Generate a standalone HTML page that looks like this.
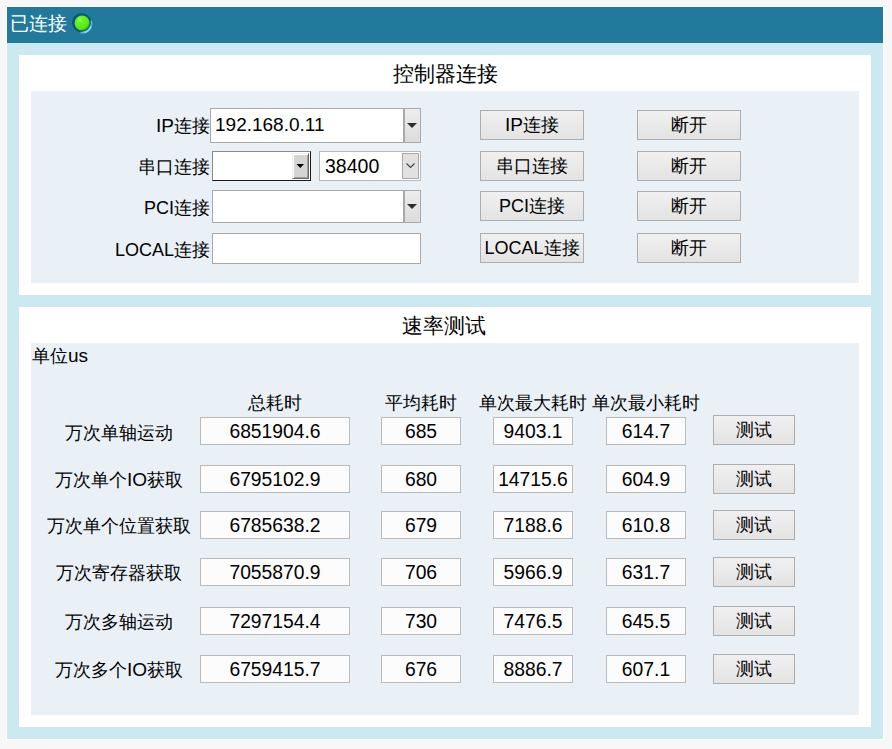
<!DOCTYPE html>
<html><head><meta charset="utf-8">
<style>
*{box-sizing:border-box;margin:0;padding:0}
html,body{width:892px;height:749px;overflow:hidden;background:#f7f7f7;font-family:"Liberation Sans",sans-serif;color:#000}
.a{position:absolute}
#frame{left:6px;top:6px;width:878px;height:734px;background:#fff}
#hdr{left:7px;top:7px;width:876px;height:36px;background:#217a9b}
#body{left:7px;top:43px;width:876px;height:696px;background:#cce8f1}
.wp{background:#fff}
.ip{background:#e9f1f7}
.t{white-space:nowrap;font-size:18px;line-height:20px}
.l{font-size:19px}
.btn{border:1px solid #adadad;background:linear-gradient(#f0f0f0,#e3e3e3);text-align:center;font-size:18px;line-height:28px;white-space:nowrap}
.cb{border:1px solid #a9a9a9;background:#fff}
.cbb{border-left:2px solid #a9a9a9;background:linear-gradient(#ededed,#dcdcdc)}
.tri{width:0;height:0;border-left:5px solid transparent;border-right:5px solid transparent;border-top:5px solid #2b2e31}
.vb{border:1px solid #bababa;background:#fcfcfc;text-align:center;font-size:19.3px;line-height:28px}
</style></head><body>
<div class="a" id="frame"></div>
<div class="a" id="hdr"></div>
<div class="a" id="body"></div>
<div class="a t" style="left:10px;top:14px;color:#fff;font-size:18.5px">已连接</div>
<svg class="a" style="left:70px;top:11px" width="26" height="26" viewBox="0 0 26 26">
<defs><radialGradient id="g" cx="0.35" cy="0.3" r="0.75"><stop offset="0" stop-color="#b4ff8c"/><stop offset="0.22" stop-color="#6cf71c"/><stop offset="0.8" stop-color="#58e80c"/><stop offset="1" stop-color="#3aa80c"/></radialGradient>
<filter id="bl" x="-30%" y="-30%" width="160%" height="160%"><feGaussianBlur stdDeviation="0.55"/></filter></defs>
<circle cx="11.6" cy="11.6" r="9.6" fill="#10577a" filter="url(#bl)"/>
<path d="M21.2 9.6 A9.6 9.6 0 0 1 10.4 21.5" stroke="#5bb4d8" stroke-width="1.6" fill="none" filter="url(#bl)"/>
<path d="M21.0 15.3 A9.6 9.6 0 0 1 13.7 21.5" stroke="#7fd4f4" stroke-width="2" fill="none" filter="url(#bl)"/>
<circle cx="12.1" cy="12" r="7.5" fill="url(#g)"/>
</svg>

<!-- panel 1 -->
<div class="a wp" style="left:19px;top:55px;width:852px;height:240px"></div>
<div class="a ip" style="left:31px;top:91px;width:828px;height:192px"></div>
<div class="a t" style="left:19px;top:62px;width:852px;text-align:center;font-size:21px;line-height:24px">控制器连接</div>

<div class="a t" style="left:60px;top:116px;width:150px;text-align:right"><span class="l">IP</span>连接</div>
<div class="a t" style="left:60px;top:157px;width:150px;text-align:right">串口连接</div>
<div class="a t" style="left:60px;top:198px;width:150px;text-align:right"><span class="l" style="font-size:18px">PCI</span>连接</div>
<div class="a t" style="left:60px;top:240px;width:150px;text-align:right"><span class="l" style="font-size:18px">LOCAL</span>连接</div>

<div class="a cb" style="left:210px;top:108px;width:211px;height:35px"></div>
<div class="a t" style="left:215px;top:115px;font-size:19px">192.168.0.11</div>
<div class="a cbb" style="left:403px;top:109px;width:17px;height:33px"></div>
<div class="a tri" style="left:407px;top:123px"></div>

<div class="a" style="left:212px;top:151px;width:99px;height:30px;background:#fff;border-top:1px solid #8a8a8a;border-left:1px solid #8a8a8a;border-right:1px solid #1a1a1a;border-bottom:1px solid #1a1a1a"></div>
<div class="a" style="left:292px;top:153px;width:17px;height:26px;background:#d4d4d4;border-top:1px solid #f0f0f0;border-left:1px solid #f0f0f0;border-right:1px solid #696969;border-bottom:1px solid #696969;box-shadow:inset 1px 1px 0 #fff,inset -1px -1px 0 #a0a0a0"></div>
<svg class="a" style="left:290px;top:160px" width="20" height="12"><polygon points="6.5,4 14,4 10.25,8" fill="#000"/></svg>

<div class="a cb" style="left:319px;top:151px;width:102px;height:30px;border-color:#b8b8b8"></div>
<div class="a t" style="left:325px;top:156px;font-size:19.5px">38400</div>
<div class="a" style="left:402px;top:153px;width:17px;height:26px;border:1px solid #a8a8a8;background:#e1e1e1"></div>
<svg class="a" style="left:402px;top:153px" width="17" height="26"><path d="M4.5 10.5 L8.5 14.5 L12.5 10.5" stroke="#404040" stroke-width="1.1" fill="none"/></svg>

<div class="a cb" style="left:212px;top:190px;width:209px;height:33px"></div>
<div class="a cbb" style="left:403px;top:191px;width:17px;height:31px"></div>
<div class="a tri" style="left:407px;top:204px"></div>

<div class="a cb" style="left:212px;top:233px;width:209px;height:31px"></div>

<div class="a btn" style="left:480px;top:110px;width:104px;height:30px"><span class="l">IP</span>连接</div>
<div class="a btn" style="left:480px;top:151px;width:104px;height:30px">串口连接</div>
<div class="a btn" style="left:480px;top:191px;width:104px;height:30px"><span class="l" style="font-size:18px">PCI</span>连接</div>
<div class="a btn" style="left:480px;top:233px;width:104px;height:30px"><span class="l" style="font-size:18px">LOCAL</span>连接</div>
<div class="a btn" style="left:637px;top:110px;width:104px;height:30px">断开</div>
<div class="a btn" style="left:637px;top:151px;width:104px;height:30px">断开</div>
<div class="a btn" style="left:637px;top:191px;width:104px;height:30px">断开</div>
<div class="a btn" style="left:637px;top:233px;width:104px;height:30px">断开</div>

<!-- panel 2 -->
<div class="a wp" style="left:19px;top:307px;width:852px;height:420px"></div>
<div class="a ip" style="left:31px;top:343px;width:828px;height:372px"></div>
<div class="a t" style="left:18px;top:314px;width:852px;text-align:center;font-size:21px;line-height:24px">速率测试</div>
<div class="a t" style="left:32px;top:346px">单位<span class="l">us</span></div>

<div class="a t" style="left:200px;top:393px;width:150px;text-align:center">总耗时</div>
<div class="a t" style="left:361px;top:393px;width:120px;text-align:center">平均耗时</div>
<div class="a t" style="left:463px;top:393px;width:140px;text-align:center">单次最大耗时</div>
<div class="a t" style="left:576px;top:393px;width:140px;text-align:center">单次最小耗时</div>
<div class="a t" style="left:39px;top:423px;width:160px;text-align:center">万次单轴运动</div>
<div class="a vb" style="left:200px;top:417px;width:150px;height:28px">6851904.6</div>
<div class="a vb" style="left:381px;top:417px;width:80px;height:28px">685</div>
<div class="a vb" style="left:493px;top:417px;width:80px;height:28px">9403.1</div>
<div class="a vb" style="left:606px;top:417px;width:80px;height:28px">614.7</div>
<div class="a btn" style="left:713px;top:415px;width:82px;height:30px">测试</div>
<div class="a t" style="left:39px;top:470px;width:160px;text-align:center">万次单个<span class='l'>IO</span>获取</div>
<div class="a vb" style="left:200px;top:465px;width:150px;height:28px">6795102.9</div>
<div class="a vb" style="left:381px;top:465px;width:80px;height:28px">680</div>
<div class="a vb" style="left:493px;top:465px;width:80px;height:28px">14715.6</div>
<div class="a vb" style="left:606px;top:465px;width:80px;height:28px">604.9</div>
<div class="a btn" style="left:713px;top:464px;width:82px;height:30px">测试</div>
<div class="a t" style="left:39px;top:516px;width:160px;text-align:center">万次单个位置获取</div>
<div class="a vb" style="left:200px;top:511px;width:150px;height:28px">6785638.2</div>
<div class="a vb" style="left:381px;top:511px;width:80px;height:28px">679</div>
<div class="a vb" style="left:493px;top:511px;width:80px;height:28px">7188.6</div>
<div class="a vb" style="left:606px;top:511px;width:80px;height:28px">610.8</div>
<div class="a btn" style="left:713px;top:510px;width:82px;height:30px">测试</div>
<div class="a t" style="left:39px;top:563px;width:160px;text-align:center">万次寄存器获取</div>
<div class="a vb" style="left:200px;top:558px;width:150px;height:28px">7055870.9</div>
<div class="a vb" style="left:381px;top:558px;width:80px;height:28px">706</div>
<div class="a vb" style="left:493px;top:558px;width:80px;height:28px">5966.9</div>
<div class="a vb" style="left:606px;top:558px;width:80px;height:28px">631.7</div>
<div class="a btn" style="left:713px;top:557px;width:82px;height:30px">测试</div>
<div class="a t" style="left:39px;top:612px;width:160px;text-align:center">万次多轴运动</div>
<div class="a vb" style="left:200px;top:607px;width:150px;height:28px">7297154.4</div>
<div class="a vb" style="left:381px;top:607px;width:80px;height:28px">730</div>
<div class="a vb" style="left:493px;top:607px;width:80px;height:28px">7476.5</div>
<div class="a vb" style="left:606px;top:607px;width:80px;height:28px">645.5</div>
<div class="a btn" style="left:713px;top:606px;width:82px;height:30px">测试</div>
<div class="a t" style="left:39px;top:660px;width:160px;text-align:center">万次多个<span class='l'>IO</span>获取</div>
<div class="a vb" style="left:200px;top:655px;width:150px;height:28px">6759415.7</div>
<div class="a vb" style="left:381px;top:655px;width:80px;height:28px">676</div>
<div class="a vb" style="left:493px;top:655px;width:80px;height:28px">8886.7</div>
<div class="a vb" style="left:606px;top:655px;width:80px;height:28px">607.1</div>
<div class="a btn" style="left:713px;top:654px;width:82px;height:30px">测试</div>
</body></html>
